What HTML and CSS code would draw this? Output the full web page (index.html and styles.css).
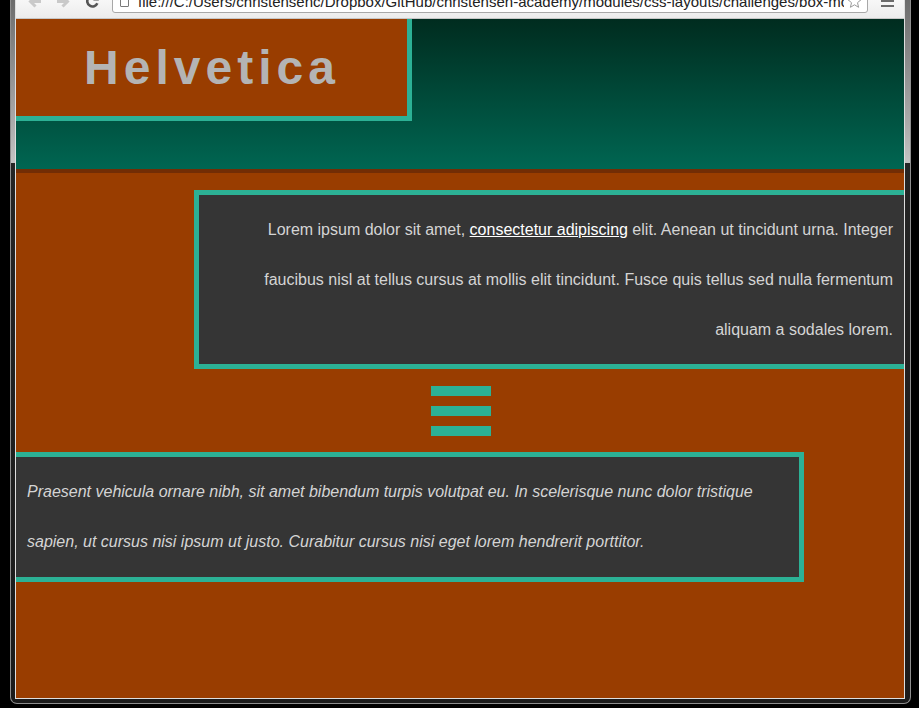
FILE: index.html
```html
<!DOCTYPE html>
<html lang="en">
<head>
<meta charset="utf-8">
<title>Box Model Challenge</title>
<link rel="stylesheet" href="styles.css">
</head>
<body>
<div class="window">
  <div class="viewport">
    <div class="toolbar">
      <div class="toolbar-row">
        <svg class="nav" viewBox="0 0 15 15" aria-hidden="true"><path d="M14 7.5H4.5M8.5 2.5L3.5 7.5l5 5" fill="none" stroke="#c9c9c9" stroke-width="3"/></svg>
        <svg class="nav nav-gap" viewBox="0 0 15 15" aria-hidden="true"><path d="M1 7.5h9.5M6.5 2.5l5 5-5 5" fill="none" stroke="#c9c9c9" stroke-width="3"/></svg>
        <svg class="nav nav-gap" viewBox="0 0 15 15" aria-hidden="true"><path d="M12.3 9.2A5.2 5.2 0 1 1 11.2 3.6" fill="none" stroke="#555" stroke-width="2.6"/><path d="M13.8 0.8v5.6H8.2z" fill="#555"/></svg>
        <div class="omnibox">
          <span class="page-icon"></span>
          <span class="url">file:///C:/Users/christensenc/Dropbox/GitHub/christensen-academy/modules/css-layouts/challenges/box-model/index.html</span>
          <svg class="star" viewBox="0 0 15 15" aria-hidden="true"><path d="M7.5 1l1.9 4.3 4.6.4-3.5 3 1.1 4.6-4.1-2.5-4.1 2.5 1.1-4.6-3.5-3 4.6-.4z" fill="#fff" stroke="#9a9a9a" stroke-width="1"/></svg>
        </div>
        <div class="menu"><span></span><span></span><span></span></div>
      </div>
    </div>
    <div class="page">
      <header class="masthead">
        <div class="logo">Helvetica</div>
      </header>
      <section class="panel panel-right">
        <p>Lorem ipsum dolor sit amet, <a href="#">consectetur adipiscing</a> elit. Aenean ut tincidunt urna. Integer<br>faucibus nisl at tellus cursus at mollis elit tincidunt. Fusce quis tellus sed nulla fermentum<br>aliquam a sodales lorem.</p>
      </section>
      <div class="burger"><span></span><span></span><span></span></div>
      <section class="panel panel-left">
        <p>Praesent vehicula ornare nibh, sit amet bibendum turpis volutpat eu. In scelerisque nunc dolor tristique<br>sapien, ut cursus nisi ipsum ut justo. Curabitur cursus nisi eget lorem hendrerit porttitor.</p>
      </section>
    </div>
  </div>
</div>
</body>
</html>
```

FILE: styles.css
```css
html, body {
  margin: 0;
  padding: 0;
}

body {
  background: #000;
  width: 919px;
  height: 708px;
  overflow: hidden;
  font-family: "Liberation Sans", Arial, sans-serif;
}

.window {
  box-sizing: border-box;
  margin-left: 10px;
  width: 901px;
  height: 704px;
  border: 1px solid #8e8e8e;
  border-top: 0;
  border-radius: 0 0 7px 7px;
  padding: 0 5px 4px 4px;
  background: linear-gradient(to bottom, #6c6c6c 0, #a9a9a9 120px, #c3c3c3 163px, #252525 163px, #1b1b1b 100%);
}

.viewport {
  box-sizing: border-box;
  height: 699px;
  border: 1px solid #dedede;
  border-top: 0;
}

.toolbar {
  box-sizing: border-box;
  height: 19px;
  overflow: hidden;
  background: linear-gradient(to bottom, #f7f7f7, #ececec);
  border-bottom: 1px solid #c6c6c6;
}

.toolbar-row {
  display: flex;
  align-items: center;
  height: 24px;
  margin-top: -11px;
  padding-left: 11px;
}

.nav {
  flex: none;
  width: 15px;
  height: 15px;
}

.nav-gap {
  margin-left: 14px;
}

.omnibox {
  box-sizing: border-box;
  flex: none;
  display: flex;
  align-items: center;
  width: 756px;
  height: 24px;
  margin-left: 12px;
  padding: 0 5px 0 7px;
  background: #fff;
  border: 1px solid #a8a8a8;
  border-radius: 0 0 3px 3px;
}

.page-icon {
  flex: none;
  box-sizing: border-box;
  width: 9px;
  height: 12px;
  border: 1px solid #7a7a7a;
  border-radius: 1px;
  background: #fff;
}

.url {
  flex: 1;
  min-width: 0;
  margin-left: 9px;
  overflow: hidden;
  white-space: nowrap;
  font-size: 15px;
  color: #222;
}

.star {
  flex: none;
  width: 15px;
  height: 15px;
  margin-left: 3px;
}

.menu {
  flex: none;
  display: flex;
  flex-direction: column;
  gap: 3px;
  width: 13px;
  margin-left: 13px;
}

.menu span {
  display: block;
  height: 2px;
  background: #6b6b6b;
}

.page {
  height: 679px;
  background: #993d00;
  overflow: hidden;
}

.masthead {
  height: 150px;
  background: linear-gradient(to bottom, #002c1f, #006652);
  border-bottom: 4px solid #722d05;
}

.logo {
  width: 391px;
  height: 97px;
  background: #993d00;
  border-right: 5px solid #2cb195;
  border-bottom: 5px solid #2cb195;
  color: #b4b4b4;
  font-size: 48px;
  font-weight: bold;
  line-height: 97px;
  letter-spacing: 5px;
  text-indent: 1px;
  text-align: center;
}

.panel {
  box-sizing: border-box;
  background: #353535;
  border: 5px solid #2cb195;
  color: #d4d4d4;
  font-size: 16px;
  line-height: 50px;
}

.panel p {
  margin: 0;
}

.panel-right {
  margin: 17px 0 0 178px;
  border-right: 0;
  padding: 10px 11px 9px 20px;
  text-align: right;
}

.panel-right a {
  color: #fff;
  text-decoration: underline;
}

.burger {
  display: flex;
  flex-direction: column;
  gap: 10px;
  width: 60px;
  margin: 17px 0 0 415px;
}

.burger span {
  display: block;
  height: 10px;
  background: #2cb195;
}

.panel-left {
  width: 788px;
  margin-top: 16px;
  border-left: 0;
  padding: 10px 0 10px 11px;
  font-style: italic;
}
```
